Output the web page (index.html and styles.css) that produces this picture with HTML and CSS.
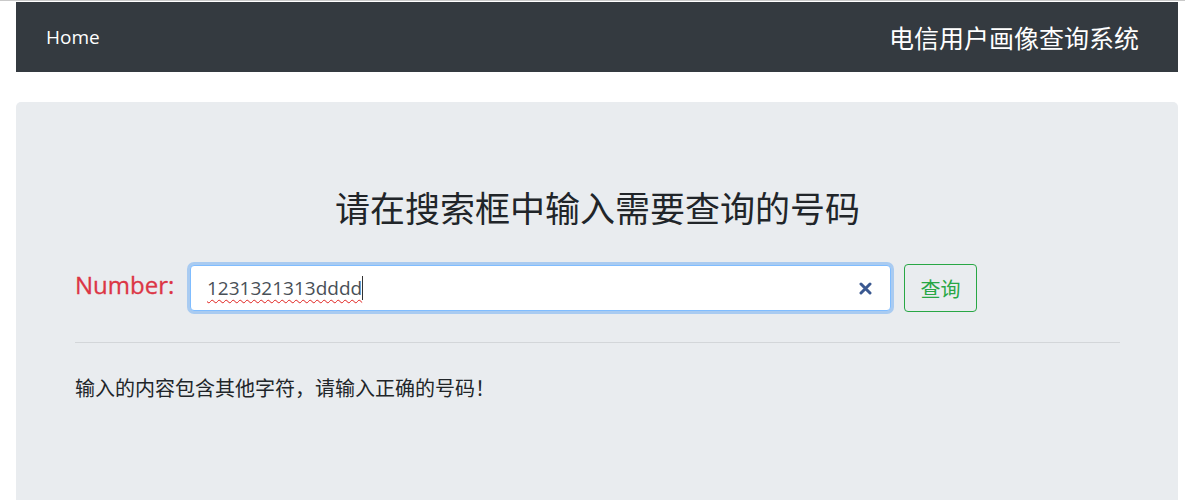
FILE: index.html
```html
<!DOCTYPE html>
<html>
  <head>
    <title>电信用户画像查询系统</title>
    <link rel="stylesheet" href="styles.css">
  </head>

  <body>
    <nav class="navbar">
      <a class="nav-home" href="#">Home</a>
      <span class="nav-title">电信用户画像查询系统</span>
    </nav>

    <div class="jumbotron">
      <h1 class="search-title">请在搜索框中输入需要查询的号码</h1>

      <form class="search-row" action="#" method="get">
        <label class="search-label" for="number">Number:</label>
        <div class="search-input" id="number">
          <span class="typed">1231321313dddd</span><span class="caret"></span>
          <!-- clear button like the browser's search input -->
          <svg class="clear-icon" width="13" height="13" viewBox="0 0 13 13">
            <path d="M2 2 L11 11 M11 2 L2 11" stroke="#3a5890" stroke-width="3" stroke-linecap="round" />
          </svg>
        </div>
        <button class="search-btn" type="button">查询</button>
      </form>

      <hr class="divider" />

      <p class="message">输入的内容包含其他字符，请输入正确的号码！</p>
    </div>
  </body>
</html>
```

FILE: styles.css
```css
html {
  border-top: 1px solid #c9c9c9;
}

body {
  margin: 1px 7px 0 16px;
  font-family: "Open Sans", "Noto Sans CJK SC", sans-serif;
  color: #212529;
  background: #fff;
}

.navbar {
  display: flex;
  align-items: center;
  justify-content: space-between;
  height: 70px;
  padding: 0 39px 0 30px;
  background-color: #343a40;
}

.nav-home {
  color: #fff;
  font-size: 19px;
  text-decoration: none;
}

.nav-title {
  color: #fff;
  font-size: 25px;
  font-family: "Noto Sans CJK SC", sans-serif;
}

.jumbotron {
  margin-top: 30px;
  height: 420px;
  padding: 83px 58px 0 59px;
  background-color: #e9ecef;
  border-radius: 5px 5px 0 0;
  box-sizing: border-box;
}

.search-title {
  margin: 0 0 35px;
  text-align: center;
  font-family: "Noto Sans CJK SC", sans-serif;
  font-size: 35px;
  font-weight: 400;
  line-height: 44px;
  color: #212529;
}

.search-row {
  display: flex;
  align-items: center;
  height: 48px;
}

.search-label {
  width: 100px;
  color: #dc3545;
  font-size: 24px;
  margin: -8px 15px 0 0;
  white-space: nowrap;
  -webkit-text-stroke: 0.3px #dc3545;
}

.search-input {
  position: relative;
  display: flex;
  align-items: center;
  width: 701px;
  height: 46px;
  padding: 0 16px;
  box-sizing: border-box;
  background: #fff;
  border: 1px solid #80bdff;
  border-radius: 4px;
  box-shadow: 0 0 0 3px #a9cbf1;
  font-size: 19px;
  color: #495057;
}

.typed {
  text-decoration: underline wavy #e0201c;
  text-decoration-thickness: 1px;
  text-underline-offset: 4px;
}

.caret {
  display: inline-block;
  width: 1px;
  height: 24px;
  background: #333;
}

.clear-icon {
  position: absolute;
  right: 18px;
  top: 16px;
}

.search-btn {
  margin-left: 13px;
  width: 73px;
  height: 48px;
  background: transparent;
  border: 1px solid #28a745;
  border-radius: 4px;
  color: #28a745;
  font-family: "Noto Sans CJK SC", sans-serif;
  font-size: 20px;
  cursor: pointer;
}

.divider {
  margin: 30px 0 0;
  border: none;
  border-top: 1px solid #d3d6d9;
}

.message {
  margin: 33px 0 0;
  font-family: "Noto Sans CJK SC", sans-serif;
  font-size: 20px;
  line-height: 24px;
}
```
